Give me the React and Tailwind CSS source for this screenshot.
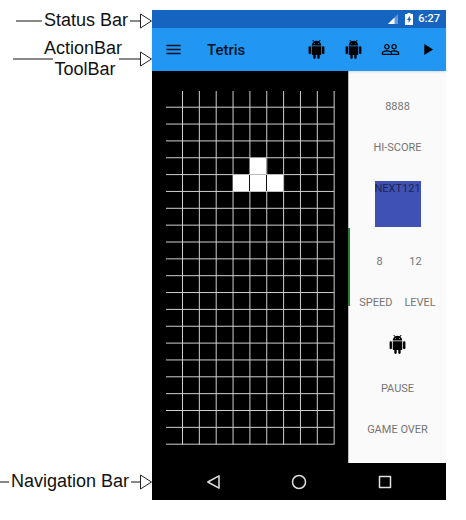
const ANDROID_PATH =
  'M6 18c0 .55.45 1 1 1h1v3.5c0 .83.67 1.5 1.5 1.5s1.5-.67 1.5-1.5V19h2v3.5c0 .83.67 1.5 1.5 1.5s1.5-.67 1.5-1.5V19h1c.55 0 1-.45 1-1V8H6v10zM3.5 8C2.67 8 2 8.67 2 9.5v7c0 .83.67 1.5 1.5 1.5S5 17.33 5 16.5v-7C5 8.67 4.33 8 3.5 8zm17 0c-.83 0-1.5.67-1.5 1.5v7c0 .83.67 1.5 1.5 1.5s1.5-.67 1.5-1.5v-7c0-.83-.67-1.5-1.5-1.5zm-4.97-5.84l1.3-1.3c.2-.2.2-.51 0-.71-.2-.2-.51-.2-.71 0l-1.48 1.48C13.85 1.23 12.95 1 12 1c-.96 0-1.86.23-2.66.63L7.85.15c-.2-.2-.51-.2-.71 0-.2.2-.2.51 0 .71l1.31 1.31C6.97 3.26 6 5.01 6 7h12c0-1.99-.97-3.75-2.47-4.84zM10 5H9V4h1v1zm5 0h-1V4h1v1z';
const PEOPLE_PATH =
  'M16.5 13c-1.2 0-3.07.34-4.5 1-1.43-.67-3.3-1-4.5-1C5.33 13 1 14.08 1 16.25V19h22v-2.75c0-2.17-4.33-3.25-6.5-3.25zm-4 4.5h-10v-1.25c0-.54 2.56-1.75 5-1.75s5 1.21 5 1.75v1.25zm9 0H14v-1.25c0-.46-.2-.86-.52-1.22.88-.3 1.96-.53 3.02-.53 2.44 0 5 1.21 5 1.75v1.25zM7.5 12c1.93 0 3.5-1.57 3.5-3.5S9.43 5 7.5 5 4 6.57 4 8.5 5.57 12 7.5 12zm0-5.5c1.1 0 2 .9 2 2s-.9 2-2 2-2-.9-2-2 .9-2 2-2zm9 5.5c1.93 0 3.5-1.57 3.5-3.5S18.43 5 16.5 5 13 6.57 13 8.5s1.57 3.5 3.5 3.5zm0-5.5c1.1 0 2 .9 2 2s-.9 2-2 2-2-.9-2-2 .9-2 2-2z';
const PLAY_PATH = 'M8 5v14l11-7z';
const MENU_PATH = 'M3 18h18v-2H3v2zm0-5h18v-2H3v2zm0-7v2h18V6H3z';

function Icon({ path }) {
  return (
    <svg viewBox="0 0 24 24" className="size-[19px]" fill="currentColor" aria-hidden="true">
      <path d={path} />
    </svg>
  );
}

function ArrowHead() {
  return (
    <svg viewBox="0 0 12 16" className="h-4 w-3 shrink-0" fill="#fff" stroke="#222" aria-hidden="true">
      <path d="M.5 1v14L11.5 8z" />
    </svg>
  );
}

function Line({ className }) {
  return <span className={`h-0.5 bg-[#888] ${className}`} />;
}

function Annotations() {
  return (
    <div className="flex w-[152px] shrink-0 flex-col text-lg leading-[21px] whitespace-nowrap text-[#111]">
      <div className="flex items-center pl-4">
        <Line className="w-[26px]" />
        <span className="pl-0.5">Status Bar</span>
        <Line className="ml-0.5 flex-1" />
        <ArrowHead />
      </div>
      <div className="mt-[7px] flex items-center pl-[13px]">
        <Line className="w-10" />
        <div className="-ml-[9px] text-center">
          <div>ActionBar</div>
          <div className="pl-1">ToolBar</div>
        </div>
        <Line className="-ml-[3px] flex-1" />
        <ArrowHead />
      </div>
      <div className="mt-auto mb-2 flex items-center">
        <Line className="w-[9px]" />
        <span className="pl-0.5">Navigation Bar</span>
        <Line className="ml-0.5 flex-1" />
        <ArrowHead />
      </div>
    </div>
  );
}

function StatusBar() {
  return (
    <div className="flex h-[18px] items-center justify-end bg-[#1565c0] pr-1.5 text-white">
      <svg viewBox="0 0 10 10" className="mr-[7px] size-2.5" aria-hidden="true">
        <path d="M10 0v10H0z" fill="#fff" opacity=".35" />
        <path d="M6.5 3.5V10H0z" fill="#fff" />
      </svg>
      <svg viewBox="0 0 8 12" className="mr-[5px] h-3 w-2" aria-hidden="true">
        <path d="M2.5 0h3v1H8v11H0V1h2.5z" fill="#fff" />
        <path d="M4.8 2.7L2 7h1.6v3L6.2 5.800H4.800z" fill="#1565c0" />
      </svg>
      <span className="text-[11px] leading-[18px] font-medium">6:27</span>
    </div>
  );
}

const ACTIONS = [
  { label: 'Android one', path: ANDROID_PATH },
  { label: 'Android two', path: ANDROID_PATH },
  { label: 'Players', path: PEOPLE_PATH },
  { label: 'Play', path: PLAY_PATH },
];

function ToolBar() {
  return (
    <header className="relative z-10 flex h-[43px] items-center bg-[#2196f3] pl-3 text-black shadow-sm">
      <button type="button" aria-label="Menu" className="text-[#04131f]">
        <Icon path={MENU_PATH} />
      </button>
      <h1 className="ml-6 flex-1 pt-0.5 text-[15px] font-medium text-[#04131f]">Tetris</h1>
      {ACTIONS.map((action) => (
        <button
          key={action.label}
          type="button"
          aria-label={action.label}
          className="flex w-[37px] justify-center"
        >
          <Icon path={action.path} />
        </button>
      ))}
    </header>
  );
}

const CELL = 16.85;
const COLS = Array.from({ length: 10 }, (_, i) => 30.5 + i * CELL);
const ROWS = Array.from({ length: 21 }, (_, i) => 36.2 + i * CELL);

function Board() {
  return (
    <svg viewBox="0 0 196 392" className="block w-full" role="img" aria-label="Game board">
      <g stroke="#d0d0d0" strokeWidth="1">
        {COLS.map((x) => (
          <line key={x} x1={x} x2={x} y1="20" y2="373.500" />
        ))}
        {ROWS.map((y) => (
          <line key={y} x1="14" x2="182" y1={y} y2={y} />
        ))}
      </g>
      <rect x="98" y="87" width="16" height="16" fill="#fff" />
      <rect x="81" y="104" width="16" height="16" fill="#fff" />
      <rect x="98" y="104" width="16" height="16" fill="#fff" />
      <rect x="115" y="104" width="16" height="16" fill="#fff" />
      <path d="M97.500 104v16M114.500 104v16" stroke="#111" />
    </svg>
  );
}

function Row({ children }) {
  return <div className="flex h-[41px] items-center justify-center">{children}</div>;
}

function ScorePanel() {
  return (
    <aside className="relative w-1/3 border-l border-[#bbb] bg-[#fafafa] pt-4 text-[11px] text-[#757575]">
      <div className="absolute top-[157px] -left-px h-[78px] w-0.5 bg-[#2e7d32]" />
      <Row>8888</Row>
      <Row>HI-SCORE</Row>
      <div className="flex h-[73px] justify-center pt-3">
        <div className="size-[46px] bg-[#3f51b5] text-center leading-4 text-[#1c2451]">NEXT121</div>
      </div>
      <div className="grid grid-cols-[36px_36px] justify-center">
        <Row>8</Row>
        <Row>12</Row>
      </div>
      <div className="flex justify-center gap-3">
        <Row>SPEED</Row>
        <Row>LEVEL</Row>
      </div>
      <div className="flex h-[45px] items-center justify-center pb-1 text-black">
        <button type="button" aria-label="Android">
          <Icon path={ANDROID_PATH} />
        </button>
      </div>
      <Row>PAUSE</Row>
      <Row>GAME OVER</Row>
    </aside>
  );
}

const NAV = [
  { label: 'Back', shape: <path d="M14 1.800v12.400L2.800 8z" /> },
  { label: 'Home', shape: <circle cx="8" cy="8" r="6.500" /> },
  { label: 'Recents', shape: <rect x="2.500" y="2.500" width="11" height="11" /> },
];

function NavigationBar() {
  return (
    <nav className="grid h-[37px] grid-cols-[86px_86px_86px] items-center justify-center bg-black">
      {NAV.map((item) => (
        <button key={item.label} type="button" aria-label={item.label} className="flex justify-center">
          <svg
            viewBox="0 0 16 16"
            className="size-4"
            fill="none"
            stroke="#e0e0e0"
            strokeWidth="1.500"
            strokeLinejoin="round"
            aria-hidden="true"
          >
            {item.shape}
          </svg>
        </button>
      ))}
    </nav>
  );
}

export default function App() {
  return (
    <main className="flex bg-white pt-2.5 pr-5 pb-5 font-['Liberation_Sans',Arial,sans-serif]">
      <Annotations />
      <div className="min-w-0 flex-1 font-[Roboto,sans-serif]">
        <StatusBar />
        <ToolBar />
        <div className="flex bg-black">
          <div className="w-2/3">
            <Board />
          </div>
          <ScorePanel />
        </div>
        <NavigationBar />
      </div>
    </main>
  );
}
